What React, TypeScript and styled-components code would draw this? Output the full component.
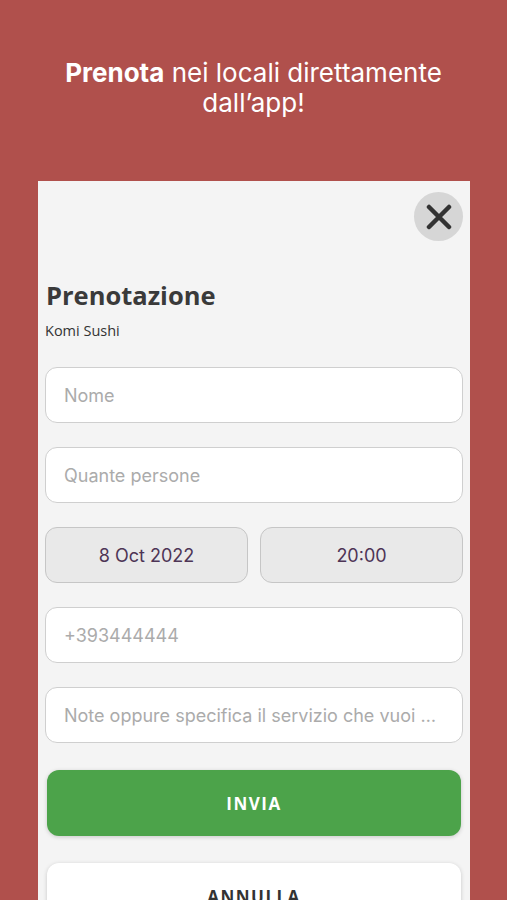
import React from 'react'
import styled, { createGlobalStyle } from 'styled-components'

const Global = createGlobalStyle`
  html, body {
    margin: 0;
    padding: 0;
    background: #b0504c;
  }
  body {
    height: 900px;
    overflow: hidden;
    font-family: Inter, "Liberation Sans", sans-serif;
  }
  * { box-sizing: border-box; }
`

const App = () => {
  return (
    <Page>
      <Global />
      <Headline>
        <b>Prenota</b> nei locali direttamente
        <br />
        dall’app!
      </Headline>
      <Card>
        <CloseRow>
          <CloseBtn aria-label="chiudi">
            <svg width="26" height="26" viewBox="0 0 26 26">
              <path d="M3 3 L23 23 M23 3 L3 23" stroke="#333" strokeWidth="4.5" strokeLinecap="round" />
            </svg>
          </CloseBtn>
        </CloseRow>
        <Title>Prenotazione</Title>
        <Sub>Komi Sushi</Sub>
        <Form>
          <Field placeholder="Nome" />
          <Field placeholder="Quante persone" />
          <Row>
            <Picker>8 Oct 2022</Picker>
            <Picker>20:00</Picker>
          </Row>
          <Field placeholder="+393444444" />
          <Field placeholder="Note oppure specifica il servizio che vuoi prenotare" />
        </Form>
        <Actions>
          <Button primary>INVIA</Button>
          <Button>ANNULLA</Button>
        </Actions>
      </Card>
    </Page>
  )
}

export default App

const Page = styled.div`
  height: 900px;
  overflow: hidden;
  padding-top: 58px;
`

const Headline = styled.h1`
  margin: 0;
  color: #fff;
  font-family: Inter, "Liberation Sans", sans-serif;
  font-size: 26px;
  line-height: 30px;
  font-weight: 400;
  text-align: center;
  b { font-weight: 700; }
`

const Card = styled.div`
  margin: 63px 37px 0 38px;
  background: #f4f4f4;
  padding: 11px 7px 40px 7px;
  min-height: 760px;
`

const CloseRow = styled.div`
  display: flex;
  justify-content: flex-end;
`

const CloseBtn = styled.button`
  width: 49px;
  height: 49px;
  border-radius: 50%;
  border: none;
  background: #d6d6d6;
  display: flex;
  align-items: center;
  justify-content: center;
  padding: 0;
`

const Title = styled.h2`
  margin: 39px 0 0 1px;
  font-family: "Open Sans", sans-serif;
  font-size: 25.5px;
  line-height: 30px;
  font-weight: 700;
  color: #3a3a3a;
`

const Sub = styled.div`
  margin: 12px 0 0 0;
  font-family: "Open Sans", sans-serif;
  font-size: 14.5px;
  line-height: 18px;
  color: #333;
`

const Form = styled.div`
  margin-top: 27px;
  display: flex;
  flex-direction: column;
  gap: 24px;
`

const Field = styled.input`
  width: 100%;
  height: 56px;
  border: 1px solid #cfcfcf;
  border-radius: 12px;
  background: #fff;
  padding: 0 16px 0 18px;
  font-family: Inter, "Liberation Sans", sans-serif;
  font-size: 18px;
  color: #333;
  outline: none;
  text-overflow: ellipsis;
  &::placeholder {
    color: #ababab;
    text-overflow: ellipsis;
  }
`

const Row = styled.div`
  display: grid;
  grid-template-columns: 1fr 1fr;
  gap: 12px;
`

const Picker = styled.div`
  height: 56px;
  border: 1px solid #c6c6c6;
  border-radius: 12px;
  background: #e9e9e9;
  display: flex;
  align-items: center;
  justify-content: center;
  font-family: Inter, "Liberation Sans", sans-serif;
  font-size: 18px;
  color: #4e3556;
`

const Actions = styled.div`
  margin-top: 27px;
  padding: 0 2px;
  display: flex;
  flex-direction: column;
  gap: 27px;
`

const Button = styled.button<{ primary?: boolean }>`
  height: 66px;
  border: none;
  border-radius: 12px;
  background: ${p => (p.primary ? '#4ca34a' : '#fff')};
  color: ${p => (p.primary ? '#fff' : '#333')};
  box-shadow: 0 1px 4px rgba(0, 0, 0, 0.18);
  font-family: "Open Sans", sans-serif;
  font-size: 17px;
  font-weight: 700;
  letter-spacing: 1.5px;
`
